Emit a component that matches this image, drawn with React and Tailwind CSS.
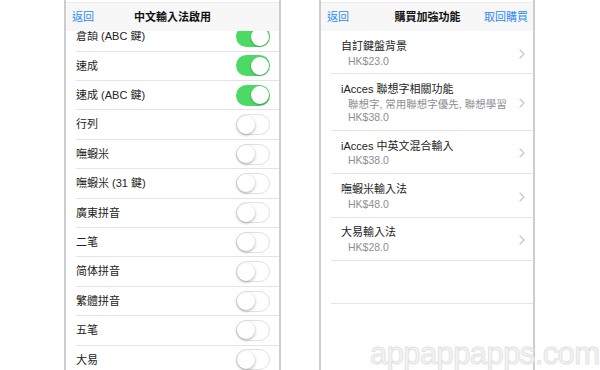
import React from 'react';

const font = { fontFamily: '"Liberation Sans", "Noto Sans CJK TC", sans-serif' };

const methods = [
  { name: '倉頡 (ABC 鍵)', on: true },
  { name: '速成', on: true },
  { name: '速成 (ABC 鍵)', on: true },
  { name: '行列', on: false },
  { name: '嘸蝦米', on: false },
  { name: '嘸蝦米 (31 鍵)', on: false },
  { name: '廣東拼音', on: false },
  { name: '二笔', on: false },
  { name: '简体拼音', on: false },
  { name: '繁體拼音', on: false },
  { name: '五笔', on: false },
  { name: '大易', on: false },
];

const purchases = [
  { title: '自訂鍵盤背景', lines: ['HK$23.0'] },
  { title: 'iAcces 聯想字相關功能', lines: ['聯想字, 常用聯想字優先, 聯想學習', 'HK$38.0'] },
  { title: 'iAcces 中英文混合輸入', lines: ['HK$38.0'] },
  { title: '嘸蝦米輸入法', lines: ['HK$48.0'] },
  { title: '大易輸入法', lines: ['HK$28.0'] },
];

const Toggle = ({ on }) =>
  on ? (
    <div className="w-[34px] h-[21px] rounded-full bg-[#4cd964] flex items-center justify-end p-[1.5px]">
      <div className="w-[18px] h-[18px] rounded-full bg-white shadow-[0_1px_2px_rgba(0,0,0,0.3)]" />
    </div>
  ) : (
    <div className="w-[34px] h-[21px] rounded-full bg-white border-[1.5px] border-[#e0e0e0] flex items-center">
      <div className="w-[18px] h-[18px] rounded-full bg-white shadow-[0_1px_3px_rgba(0,0,0,0.35)]" />
    </div>
  );

const Chevron = () => (
  <svg width="6" height="10" viewBox="0 0 6 10" fill="none">
    <path d="M1 1l4 4-4 4" stroke="#c7c7cc" strokeWidth="1.2" strokeLinecap="round" strokeLinejoin="round" />
  </svg>
);

const App = () => {
  return (
    <div className="relative w-[600px] h-[370px] bg-white overflow-hidden flex pl-[64px] gap-[38px]" style={font}>
      {/* Left phone: input methods */}
      <div className="w-[217px] h-[370px] border-x-2 border-[#cdcdcd] flex flex-col bg-white">
        <div className="h-[3px] bg-white border-b border-[#ececec]" />
        <div className="relative z-10 h-[28px] bg-[#f7f7f7] grid grid-cols-[1fr_auto_1fr] items-center px-[6px]">
          <span className="text-[11px] text-[#2a8af6]">返回</span>
          <span className="text-[11px] font-bold text-[#111]">中文輸入法啟用</span>
          <span />
        </div>
        <div className="flex-1 overflow-hidden">
          <div className="-mt-[8.7px]">
            {methods.map((m, i) => (
              <div key={i} className="ml-[10px] h-[29.4px] border-b border-[#e4e4e4] flex items-center justify-between pr-[9px]">
                <span className="text-[11px] text-[#222]">{m.name}</span>
                <Toggle on={m.on} />
              </div>
            ))}
          </div>
        </div>
      </div>

      {/* Right phone: purchases */}
      <div className="w-[216px] h-[370px] border-x-2 border-[#cdcdcd] flex flex-col bg-white">
        <div className="h-[3px] bg-white border-b border-[#ececec]" />
        <div className="h-[28px] bg-[#f7f7f7] grid grid-cols-[1fr_auto_1fr] items-center pl-[6px] pr-[5px]">
          <span className="text-[11px] text-[#2a8af6]">返回</span>
          <span className="text-[11px] font-bold text-[#111]">購買加強功能</span>
          <span className="text-[11px] text-[#2a8af6] text-right">取回購買</span>
        </div>
        <div className="flex-1">
          {purchases.map((p, i) => (
            <div key={i} className="ml-[10px] border-b border-[#e4e4e4] flex items-center justify-between pr-[8px] pt-[8px] pb-[5.4px]">
              <div className="flex flex-col gap-[2px]">
                <div className="pl-[10px] h-[14px] flex items-center text-[11px] text-[#222] whitespace-nowrap">{p.title}</div>
                <div className="pl-[17px] flex flex-col">
                  {p.lines.map((l, j) => (
                    <div key={j} className="h-[13px] flex items-center text-[10.5px] text-[#8e8e93] whitespace-nowrap">{l}</div>
                  ))}
                </div>
              </div>
              <Chevron />
            </div>
          ))}
          <div className="ml-[10px] h-[43px] border-b border-[#e4e4e4]" />
        </div>
      </div>

      {/* Watermark */}
      <div className="absolute left-[370px] top-[338px] text-[31px] leading-[31px] tracking-[-0.6px] text-[#f6f6f6] [-webkit-text-stroke:1px_#e2e2e2]">
        appappapps.com
      </div>
    </div>
  );
};

export default App;
